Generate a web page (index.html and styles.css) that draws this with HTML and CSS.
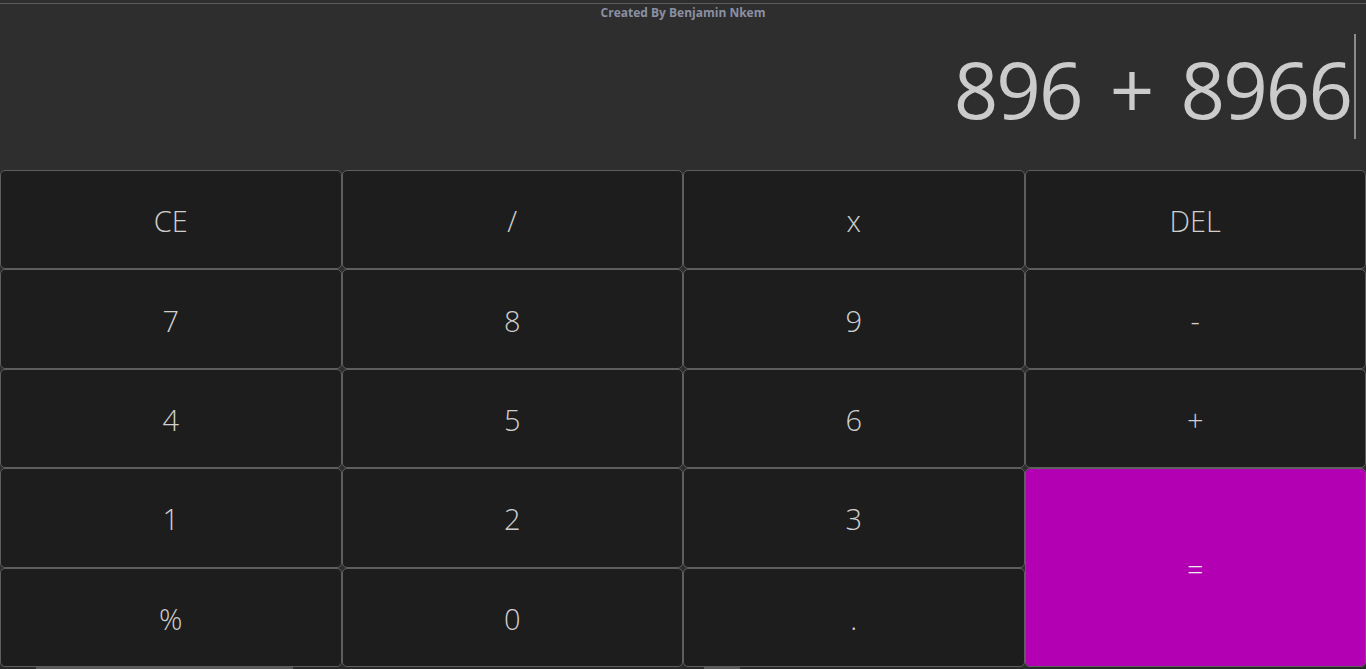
FILE: index.html
```html
<!DOCTYPE html>
<html>
<head>
<meta charset="utf-8">
<link rel="stylesheet" href="styles.css">
</head>
<body>
<div class="app">
  <div class="title">Created By Benjamin Nkem</div>
  <div class="display">
    <span class="expr">896 + 8966</span><span class="caret"></span>
  </div>
  <div class="keys">
    <div class="key">CE</div>
    <div class="key">/</div>
    <div class="key">x</div>
    <div class="key">DEL</div>
    <div class="key">7</div>
    <div class="key">8</div>
    <div class="key">9</div>
    <div class="key">-</div>
    <div class="key">4</div>
    <div class="key">5</div>
    <div class="key">6</div>
    <div class="key">+</div>
    <div class="key">1</div>
    <div class="key">2</div>
    <div class="key">3</div>
    <div class="key equals">=</div>
    <div class="key">%</div>
    <div class="key">0</div>
    <div class="key">.</div>
  </div>
  <div class="scrollbar">
    <div class="thumb thumb-a"></div>
    <div class="thumb thumb-b"></div>
  </div>
</div>
</body>
</html>
```
FILE: styles.css
```css
html, body {
  margin: 0;
  padding: 0;
  background: #2e2e2e;
  height: 669px;
  overflow: hidden;
}
.app {
  padding-top: 3px;
  font-family: "Open Sans", "Noto Sans", sans-serif;
}
.title {
  border-top: 1px solid #5c5c5c;
  padding-top: 1px;
  height: 16px;
  line-height: 16px;
  text-align: center;
  font-size: 12px;
  font-weight: 700;
  color: #8b90a2;
}
.display {
  height: 136px;
  padding-top: 13px;
  padding-right: 10px;
  display: flex;
  justify-content: flex-end;
  align-items: flex-start;
  box-sizing: content-box;
}
.expr {
  font-size: 78px;
  line-height: 105px;
  margin-top: 3px;
  color: #cbcbcb;
  letter-spacing: -2px;
  word-spacing: 10px;
  white-space: pre;
}
.caret {
  width: 2px;
  height: 105px;
  margin-left: 3px;
  background: #8c8c8c;
}
.keys {
  display: grid;
  grid-template-columns: repeat(4, 1fr);
  grid-template-rows: repeat(5, 1fr);
  height: 497px;
}
.key {
  background: #1d1d1d;
  border: 1px solid #5e5e5e;
  border-radius: 5px;
  color: #cfcfcf;
  font-size: 29px;
  font-weight: 300;
  padding-top: 2px;
  display: flex;
  align-items: center;
  justify-content: center;
}
.equals {
  grid-column: 4;
  grid-row: 4 / span 2;
  background: #b200b2;
  color: #eeeeee;
}
.scrollbar {
  height: 2px;
  display: flex;
  background: #2a2a2a;
}
.thumb {
  height: 2px;
  background: #5a5a5a;
}
.thumb-a {
  margin-left: 36px;
  width: 257px;
}
.thumb-b {
  margin-left: 411px;
  width: 36px;
}
```
